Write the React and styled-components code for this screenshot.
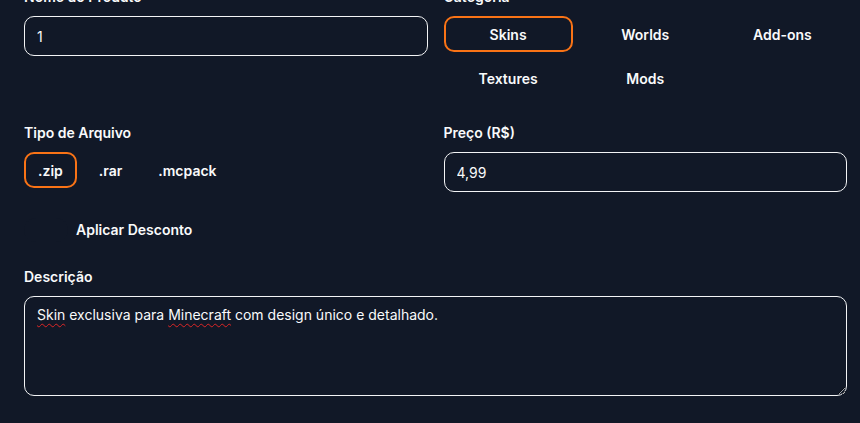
import styled, { createGlobalStyle } from "styled-components";

const GlobalStyle = createGlobalStyle`
  html, body {
    margin: 0;
    padding: 0;
    background: #111827;
    overflow: hidden;
  }
  body {
    font-family: Inter, "Noto Sans", sans-serif;
    color: #f9fafb;
  }
  * {
    box-sizing: border-box;
  }
`;

const categories = ["Skins", "Worlds", "Add-ons", "Textures", "Mods"];
const fileTypes = [".zip", ".rar", ".mcpack"];

const App = () => {
  return (
    <>
      <GlobalStyle />
      <Form>
        <Row>
          <Field>
            <Label>Nome do Produto</Label>
            <Input defaultValue="1" />
          </Field>
          <Field>
            <Label>Categoria</Label>
            <CategoryGrid>
              {categories.map((c) => (
                <Choice key={c} type="button" active={c === "Skins"}>
                  {c}
                </Choice>
              ))}
            </CategoryGrid>
          </Field>
        </Row>

        <Row>
          <Field>
            <Label>Tipo de Arquivo</Label>
            <TypeList>
              {fileTypes.map((t) => (
                <TypeButton key={t} type="button" active={t === ".zip"}>
                  {t}
                </TypeButton>
              ))}
            </TypeList>
          </Field>
          <Field>
            <Label>Preço (R$)</Label>
            <Input defaultValue="4,99" />
          </Field>
        </Row>

        <DiscountRow>
          <Switch />
          <DiscountText>Aplicar Desconto</DiscountText>
        </DiscountRow>

        <Field>
          <Label>Descrição</Label>
          <TextArea>
            <Misspelled>Skin</Misspelled> exclusiva para{" "}
            <Misspelled>Minecraft</Misspelled> com design único e detalhado.
          </TextArea>
        </Field>
      </Form>
    </>
  );
};
export default App;

const Form = styled.div`
  display: flex;
  flex-direction: column;
  margin-top: -13px;
  padding: 0 13px 0 24px;
`;

const Row = styled.div`
  display: grid;
  grid-template-columns: 1fr 1fr;
  gap: 16px;
  align-items: start;
  margin-bottom: 27px;
`;

const Field = styled.div`
  display: flex;
  flex-direction: column;
`;

const Label = styled.label`
  display: block;
  font-size: 14px;
  line-height: 20px;
  font-weight: 600;
  margin-bottom: 9px;
`;

const Input = styled.input`
  height: 40px;
  width: 100%;
  padding: 0 12px;
  background: transparent;
  border: 1px solid #f3f4f6;
  border-radius: 10px;
  color: #f9fafb;
  font-family: Inter, "Noto Sans", sans-serif;
  font-size: 14px;
  outline: none;
`;

const CategoryGrid = styled.div`
  display: grid;
  grid-template-columns: repeat(3, 1fr);
  gap: 8px;
`;

const Choice = styled.button`
  height: 36px;
  background: transparent;
  border: 2px solid ${(p) => (p.active ? "#f97316" : "transparent")};
  border-radius: 10px;
  color: #f9fafb;
  font-family: Inter, "Noto Sans", sans-serif;
  font-size: 14px;
  font-weight: 600;
  cursor: pointer;
`;

const TypeList = styled.div`
  display: flex;
  gap: 8px;
`;

const TypeButton = styled(Choice)`
  padding: 0 12px;
`;

const DiscountRow = styled.div`
  display: flex;
  align-items: center;
  gap: 8px;
  height: 24px;
  margin-top: -1px;
  margin-bottom: 25px;
`;

const Switch = styled.div`
  width: 44px;
  height: 24px;
  border-radius: 12px;
  background: #111827;
`;

const DiscountText = styled.span`
  font-size: 14px;
  line-height: 20px;
  font-weight: 600;
`;

const TextArea = styled.div`
  height: 100px;
  width: 100%;
  padding: 8px 12px;
  border: 1px solid #f3f4f6;
  border-radius: 10px;
  font-size: 14px;
  line-height: 20px;
  overflow: auto;
  resize: vertical;
`;

const Misspelled = styled.span`
  text-decoration: underline wavy #dc2626;
  text-decoration-thickness: 1px;
  text-underline-offset: 3px;
  text-decoration-skip-ink: none;
`;
